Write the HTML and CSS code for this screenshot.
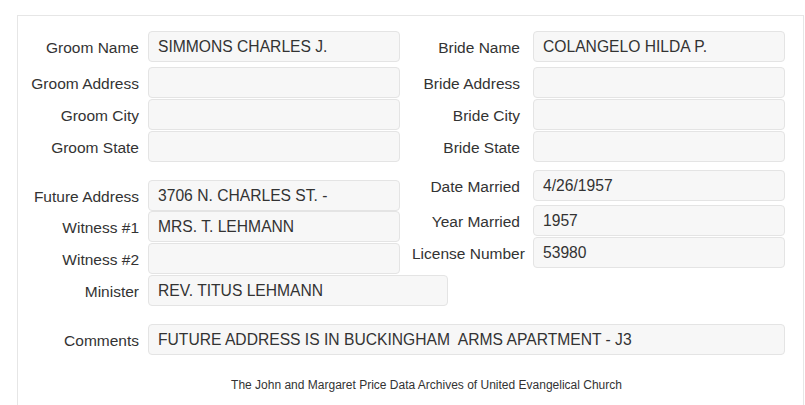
FILE: index.html
```html
<!DOCTYPE html>
<html lang="en">
<head>
    <meta charset="UTF-8">
    <title>Marriage Record</title>
    <link rel="stylesheet" href="styles.css">
</head>
<body>
    <div class="panel">
        <div class="top">
            <div class="form-row first">
                <label>Groom Name</label>
                <div class="field">SIMMONS CHARLES J.</div>
                <label class="right">Bride Name</label>
                <div class="field">COLANGELO HILDA P.</div>
            </div>
            <div class="form-row">
                <label>Groom Address</label>
                <div class="field"></div>
                <label class="right">Bride Address</label>
                <div class="field"></div>
            </div>
            <div class="form-row">
                <label>Groom City</label>
                <div class="field"></div>
                <label class="right">Bride City</label>
                <div class="field"></div>
            </div>
            <div class="form-row">
                <label>Groom State</label>
                <div class="field"></div>
                <label class="right">Bride State</label>
                <div class="field"></div>
            </div>
        </div>
        <div class="lower">
            <div class="col-left">
                <div class="pair first">
                    <label>Future Address</label>
                    <div class="field">3706 N. CHARLES ST. -</div>
                </div>
                <div class="pair">
                    <label>Witness #1</label>
                    <div class="field">MRS. T. LEHMANN</div>
                </div>
                <div class="pair">
                    <label>Witness #2</label>
                    <div class="field"></div>
                </div>
                <div class="pair">
                    <label>Minister</label>
                    <div class="field wide">REV. TITUS LEHMANN</div>
                </div>
            </div>
            <div class="col-right">
                <div class="pair first">
                    <label>Date Married</label>
                    <div class="field">4/26/1957</div>
                </div>
                <div class="pair">
                    <label>Year Married</label>
                    <div class="field">1957</div>
                </div>
                <div class="pair">
                    <label>License Number</label>
                    <div class="field">53980</div>
                </div>
            </div>
        </div>
        <div class="pair comments">
            <label>Comments</label>
            <div class="field full">FUTURE ADDRESS IS IN BUCKINGHAM&nbsp; ARMS APARTMENT - J3</div>
        </div>
        <p class="footer">The John and Margaret Price Data Archives of United Evangelical Church</p>
    </div>
</body>
</html>
```

FILE: styles.css
```css
body {
    margin: 0;
    font-family: "Liberation Sans", Arial, sans-serif;
    font-size: 15.5px;
    color: #333;
    background: #fff;
}
.panel {
    margin: 15px 0 0 17px;
    width: 787px;
    height: 420px;
    box-sizing: border-box;
    border: 1px solid #e6e6e6;
    padding-top: 15px;
}
.form-row {
    display: grid;
    grid-template-columns: 130px 252px 133px 252px;
    margin-bottom: 1px;
}
.form-row.first {
    margin-bottom: 5px;
}
label {
    display: block;
    text-align: right;
    padding-right: 9px;
    height: 31px;
    line-height: 34px;
    white-space: nowrap;
}
label.right {
    padding: 0 13px 0 12px;
}
.field {
    height: 31px;
    box-sizing: border-box;
    border: 1px solid #e4e4e4;
    border-radius: 4px;
    background: #f7f7f7;
    padding: 0 9px;
    font-size: 15.65px;
    line-height: 30px;
    white-space: nowrap;
}
.lower {
    display: flex;
    margin-top: 8px;
}
.col-left {
    width: 382px;
    padding-top: 10px;
}
.col-right {
    width: 385px;
}
.pair {
    display: grid;
    grid-template-columns: 130px 252px;
    margin-bottom: 1px;
}
.col-left .pair.first {
    margin-bottom: 0;
}
.col-right .pair {
    grid-template-columns: 133px 252px;
}
.col-right label {
    padding: 0 13px 0 12px;
}
.col-right .pair.first {
    margin-bottom: 4px;
}
.field.wide {
    width: 300px;
}
.pair.comments {
    grid-template-columns: 130px 637px;
    margin-top: 17px;
}
.footer {
    margin: 23px 0 0;
    padding-left: 32px;
    text-align: center;
    font-size: 12px;
}
```
